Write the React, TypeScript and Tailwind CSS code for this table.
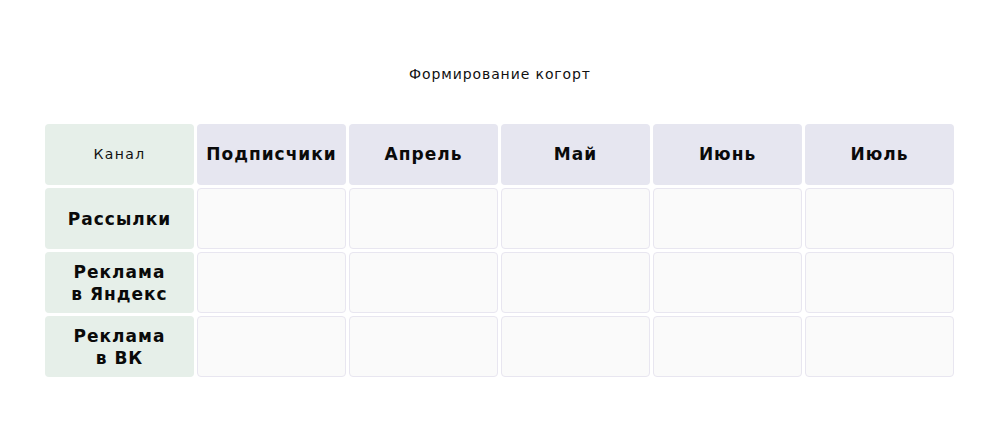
import React from 'react';

const months = ['Подписчики', 'Апрель', 'Май', 'Июнь', 'Июль'];
const channels = [['Рассылки'], ['Реклама', 'в Яндекс'], ['Реклама', 'в ВК']];

const App: React.FC = () => {
  return (
    <div className="w-[1000px] h-[442px] bg-white flex flex-col" style={{ fontFamily: '"DejaVu Sans", sans-serif' }}>
      <h1 className="mt-[64px] h-[20px] text-center text-[14px] leading-[20px] text-[#111] tracking-[0.9px]">Формирование когорт</h1>

      <div className="mt-[40px] ml-[45px] grid grid-cols-[repeat(6,149px)] auto-rows-[61px] gap-[3px]">
        <div className="rounded-[4px] bg-[#e6efe9] flex items-center justify-center text-[14px] tracking-[1.4px] text-[#111]">Канал</div>
        {months.map((m) => (
          <div key={m} className="rounded-[4px] bg-[#e6e6f0] flex items-center justify-center text-[17px] tracking-[1px] font-bold text-[#0a0a0a]">
            {m}
          </div>
        ))}

        {channels.map((lines) => (
          <React.Fragment key={lines.join(' ')}>
            <div className="rounded-[4px] bg-[#e6efe9] flex flex-col items-center justify-center text-[17px] leading-[22px] tracking-[1px] font-bold text-[#0a0a0a]">
              {lines.map((l) => (
                <span key={l}>{l}</span>
              ))}
            </div>
            {months.map((m) => (
              <div key={m} className="rounded-[4px] bg-[#fafafa] border border-[#e8e6f0]" />
            ))}
          </React.Fragment>
        ))}
      </div>
    </div>
  );
};

export default App;
